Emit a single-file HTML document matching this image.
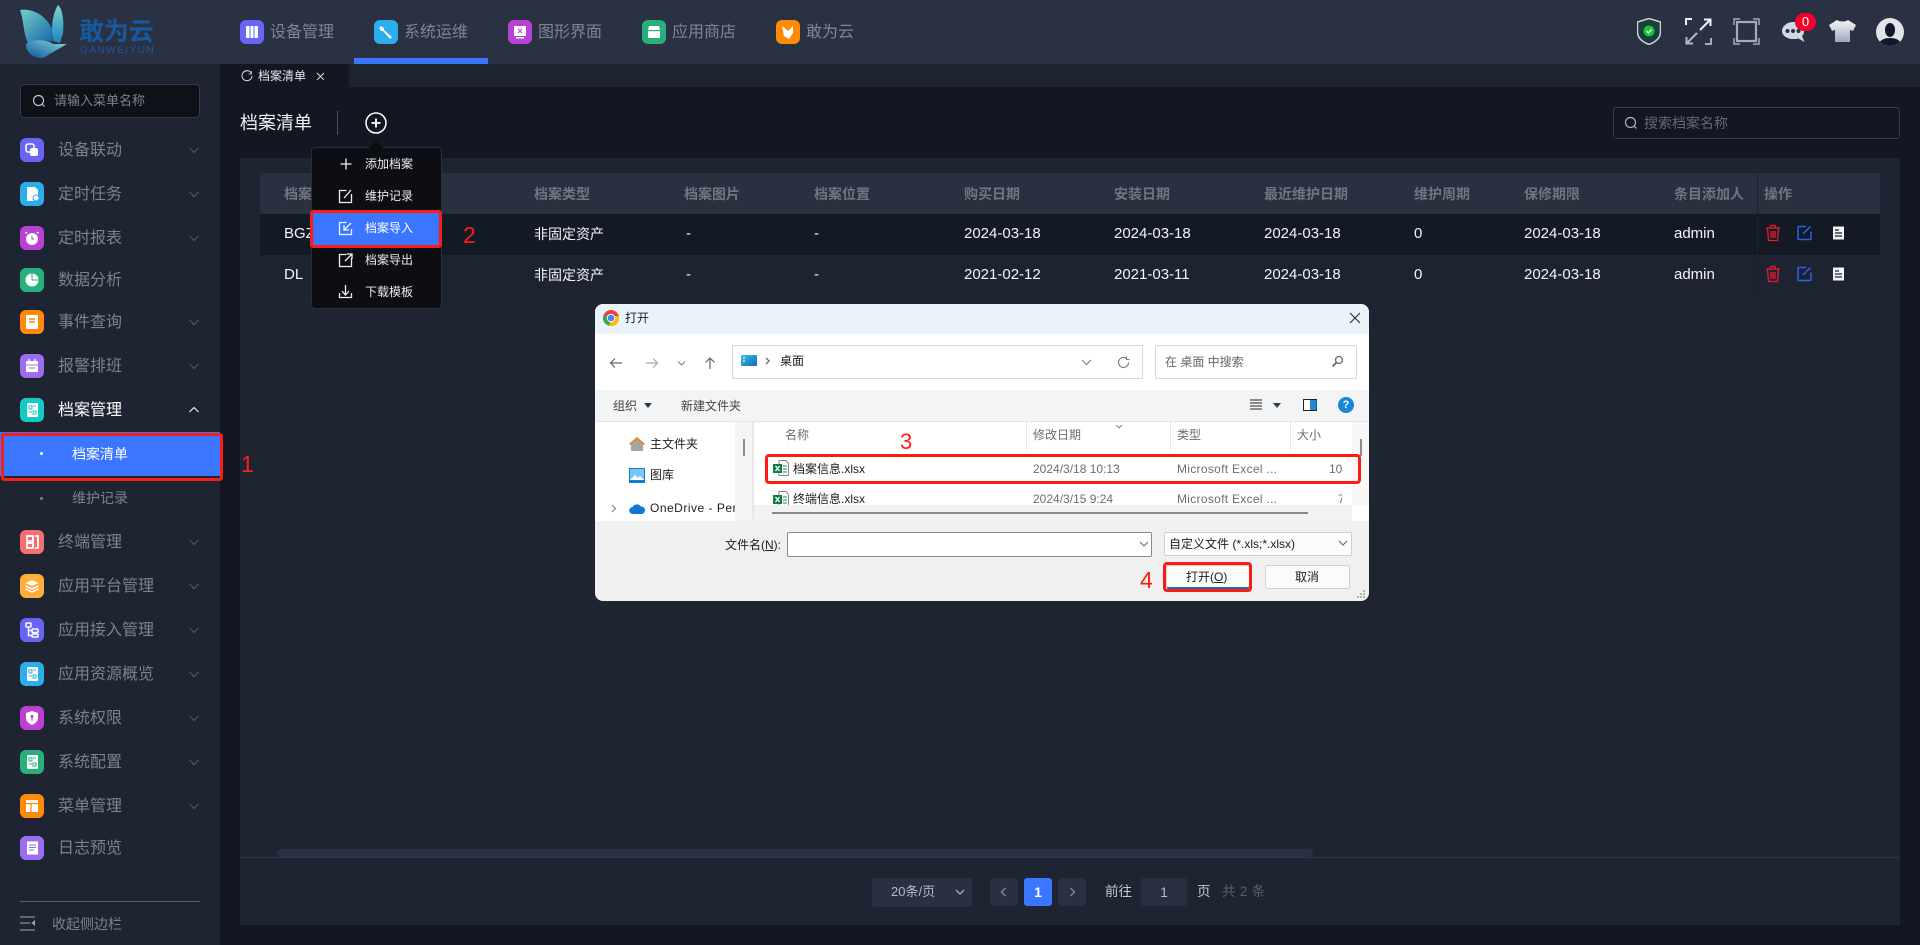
<!DOCTYPE html>
<html lang="zh-CN"><head><meta charset="utf-8"><title>档案清单</title>
<style>
html,body{margin:0;padding:0;width:1920px;height:945px;overflow:hidden;background:#131722;font-family:"Liberation Sans","Noto Sans CJK SC",sans-serif}
div,span,svg{position:absolute;box-sizing:border-box}
.t{white-space:nowrap}
.ic{width:24px;height:24px;border-radius:6px;left:20px}
.ic svg{left:0;top:0;width:24px;height:24px}
.m{left:58px;height:24px;line-height:24px;font-size:16px;color:#7c818b;white-space:nowrap;margin-top:1px}
.n{top:20px;width:24px;height:24px;border-radius:6px}
.n svg{left:0;top:0;width:24px;height:24px}
.nt{top:21px;height:24px;line-height:24px;font-size:16px;color:#81858d;white-space:nowrap}
.th{top:184px;height:20px;line-height:20px;font-size:14px;font-weight:700;color:#71757e;white-space:nowrap}
.td{height:20px;line-height:20px;font-size:15px;color:#f2f4f8;white-space:nowrap;margin-top:1px}
.tc{font-size:14px}
.p{left:365px;height:20px;line-height:20px;font-size:12px;color:#e8eaee;white-space:nowrap}
.r{border:3px solid #fb1c14;border-radius:3px}
.num{color:#fb1c14;font-size:23px;line-height:26px;height:26px;white-space:nowrap}
.d{font-size:12px;line-height:18px;height:18px;color:#202020;white-space:nowrap}
.g{color:#6d6d6d}
.b{background:#2a3040;border-radius:3px}
</style></head><body>

<!-- header -->
<div style="left:0;top:0;width:1920px;height:64px;background:#2a3142"></div>
<svg style="left:18px;top:3px;width:50px;height:57px" viewBox="0 0 50 57">
<defs><linearGradient id="w1" x1="0" y1="0" x2="1" y2="1"><stop offset="0" stop-color="#74cfc5"/><stop offset="1" stop-color="#1767ad"/></linearGradient><linearGradient id="w2" x1="0" y1="0" x2="0" y2="1"><stop offset="0" stop-color="#7cd4cb"/><stop offset="1" stop-color="#1e86c0"/></linearGradient><linearGradient id="w3" x1="1" y1="0" x2="0" y2="1"><stop offset="0" stop-color="#88dcd0"/><stop offset="1" stop-color="#0f52a4"/></linearGradient></defs>
<path d="M2 7C14 5 28 12 34 26L34 39C26 36 16 38 10 40C5 30 6 18 2 7Z" fill="url(#w1)"/>
<path d="M40 2C45 6 46 20 45 30L42 40L35 38C33 26 34 12 40 2Z" fill="url(#w2)"/>
<path d="M8 41C16 36 28 36 35 41L49 41L25 55C15 55 8 50 8 41Z" fill="url(#w3)"/>
</svg>
<div class="t" style="left:79px;top:17px;height:30px;line-height:30px;font-size:25px;font-weight:700;color:#17599f;letter-spacing:-.2px">敢为云</div>
<div class="t" style="left:80px;top:45px;height:11px;line-height:11px;font-size:10px;color:#17599f;letter-spacing:1.500px">GANWEIYUN</div>

<div class="n" style="left:240px;background:#6a64f5"><svg viewBox="0 0 24 24"><rect x="6" y="6" width="12" height="12" rx="1" fill="#fff"/><path d="M10 6v12M14 6v12" stroke="#6a64f5"/></svg></div><div class="nt" style="left:270px">设备管理</div>
<div class="n" style="left:374px;background:#2aaeec"><svg viewBox="0 0 24 24"><path d="M7 6l3 2v2l8 7-2 2-7-8H7L5 8z" fill="#fff"/></svg></div><div class="nt" style="left:404px">系统运维</div>
<div class="n" style="left:508px;background:#b942d2"><svg viewBox="0 0 24 24"><rect x="6" y="6" width="12" height="10" fill="#fff"/><rect x="8" y="17" width="8" height="1.5" fill="#fff"/><path d="M10 9l4 4M14 9l-4 4" stroke="#b942d2"/></svg></div><div class="nt" style="left:538px">图形界面</div>
<div class="n" style="left:642px;background:#27b07c"><svg viewBox="0 0 24 24"><path d="M7 6h10l1 4v8H6v-8z" fill="#fff"/><rect x="6" y="10" width="12" height="1.2" fill="#27b07c"/></svg></div><div class="nt" style="left:672px">应用商店</div>
<div class="n" style="left:776px;background:#ff8a05"><svg viewBox="0 0 24 24"><path d="M6 6l6 5 5-5v7l-4 6-5-3z" fill="#fff"/></svg></div><div class="nt" style="left:806px">敢为云</div>
<div style="left:354px;top:58px;width:134px;height:6px;background:#3a76ff"></div>

<!-- header right -->
<svg style="left:1637px;top:18px;width:24px;height:27px" viewBox="0 0 24 27"><path d="M12 .5L23.500 4v10c0 6-5 10-11.500 12.500C5.500 24 .5 20 .5 14V4z" fill="#1c3d3c" stroke="#cfd4dc" stroke-width="1.500"/><circle cx="12" cy="13" r="5.500" fill="#17c739"/><path d="M9.500 13l2 2 3-3.500" stroke="#fff" stroke-width="1.300" fill="none"/></svg>
<svg style="left:1685px;top:18px;width:27px;height:27px" viewBox="0 0 27 27" fill="none" stroke-width="2"><path d="M1 7V1h6" stroke="#f1f3f6"/><path d="M26 20v6h-6" stroke="#a4adbd"/><path d="M15 12L25 2M19 1.500h6.500V8" stroke="#f1f3f6"/><path d="M12 15L2 25M8 25.500H1.500V19" stroke="#b2bac8"/></svg>
<svg style="left:1733px;top:18px;width:27px;height:27px" viewBox="0 0 27 27" fill="none" stroke="#a3acba" stroke-width="2"><path d="M1 7V1h6M20 1h6v6M26 20v6h-6M7 26H1v-6" stroke-width="1.500"/><rect x="4" y="4" width="19" height="19" stroke-width="2.200"/></svg>
<svg style="left:1782px;top:20px;width:25px;height:24px" viewBox="0 0 25 24"><path d="M11 2c6 0 11 4 11 9 0 2-.5 4-2 5l2.500 6-6-3.500c-2 .5-3.500.5-5.500.5C5 19 0 15.500 0 11S5 2 11 2z" fill="#d3d8e0"/><circle cx="5.500" cy="11" r="2" fill="#2a3142"/><circle cx="11" cy="11" r="2" fill="#2a3142"/><circle cx="16.500" cy="11" r="2" fill="#2a3142"/></svg>
<div style="left:1795px;top:13px;width:21px;height:18px;border-radius:9px;background:#f5002d;color:#fff;font-size:13px;line-height:18px;text-align:center">0</div>
<svg style="left:1829px;top:19px;width:27px;height:24px" viewBox="0 0 27 24"><defs><linearGradient id="sh" x1="0" y1="0" x2="0" y2="1"><stop offset="0" stop-color="#f4f5f7"/><stop offset="1" stop-color="#9fa9bb"/></linearGradient></defs><path d="M8 1c2 2 9 2 11 0l8 5-3 6-3-1v12H6V11l-3 1-3-6z" fill="url(#sh)"/></svg>
<svg style="left:1876px;top:18px;width:28px;height:28px" viewBox="0 0 28 28"><defs><clipPath id="av"><circle cx="14" cy="14" r="14"/></clipPath></defs><circle cx="14" cy="14" r="14" fill="#e2e4e8"/><g clip-path="url(#av)"><ellipse cx="14" cy="12" rx="5" ry="7" fill="#10192e"/><path d="M2 28c1-6 6-8 12-8s11 2 12 8z" fill="#10192e"/></g></svg>

<!-- sidebar -->
<div style="left:0;top:64px;width:220px;height:881px;background:#1f2433"></div>
<div style="left:20px;top:84px;width:180px;height:34px;background:#0f1119;border:1px solid #333a4d;border-radius:4px"></div>
<svg style="left:32px;top:94px;width:14px;height:14px" viewBox="0 0 14 14" fill="none" stroke="#c0c4cc" stroke-width="1.200"><circle cx="6.500" cy="6.500" r="5"/><path d="M10 10l2.500 2.500"/></svg>
<div class="t" style="left:54px;top:91px;height:20px;line-height:20px;font-size:13px;color:#7e828b">请输入菜单名称</div>

<div class="ic" style="top:138px;background:#6a64f5"><svg viewBox="0 0 24 24"><rect x="6" y="6" width="8" height="8" rx="2" fill="none" stroke="#fff" stroke-width="1.500"/><rect x="10" y="10" width="8" height="8" rx="2" fill="#fff"/></svg></div><div class="m" style="top:138px">设备联动</div>
<div class="ic" style="top:182px;background:#2aaeec"><svg viewBox="0 0 24 24"><path d="M7 5h8l3 3v5h-3v6H7z" fill="#fff"/><circle cx="16" cy="16" r="3" fill="#fff" stroke="#2aaeec"/></svg></div><div class="m" style="top:182px">定时任务</div>
<div class="ic" style="top:226px;background:#b942d2"><svg viewBox="0 0 24 24"><circle cx="12" cy="13" r="6" fill="#fff"/><path d="M7 6l-1.500 1.500M17 6l1.500 1.500" stroke="#fff" stroke-width="1.500"/><path d="M12 10v3h2" stroke="#b942d2" fill="none"/></svg></div><div class="m" style="top:226px">定时报表</div>
<div class="ic" style="top:268px;background:#27b07c"><svg viewBox="0 0 24 24"><circle cx="12" cy="12" r="6.500" fill="#fff"/><path d="M12 12V5.500M12 12h6.500" stroke="#27b07c" stroke-width="1"/></svg></div><div class="m" style="top:268px">数据分析</div>
<div class="ic" style="top:310px;background:#ff8a05"><svg viewBox="0 0 24 24"><rect x="6" y="5" width="12" height="14" rx="1" fill="#fff"/><path d="M9 9h6M9 12h6" stroke="#ff8a05" stroke-width="1.500"/></svg></div><div class="m" style="top:310px">事件查询</div>
<div class="ic" style="top:354px;background:#9b6ef0"><svg viewBox="0 0 24 24"><rect x="6" y="7" width="12" height="11" rx="1" fill="#fff"/><path d="M9 5v4M15 5v4" stroke="#fff" stroke-width="1.500"/><path d="M6 11h12M9 14h6" stroke="#9b6ef0"/></svg></div><div class="m" style="top:354px">报警排班</div>
<div class="ic" style="top:398px;background:#12cbc4"><svg viewBox="0 0 24 24"><rect x="7" y="5" width="11" height="14" rx="1" fill="#fff"/><path d="M9 8h3v3H9zM13 13h3v3h-3zM13 8h3M9 14h3" stroke="#12cbc4" fill="none"/></svg></div><div class="m" style="top:398px;color:#fff">档案管理</div>

<div style="left:0;top:432px;width:220px;height:44px;background:#3a76ff"></div>
<div style="left:40px;top:452px;width:3px;height:3px;border-radius:50%;background:#fff"></div>
<div class="t" style="left:72px;top:444px;height:20px;line-height:20px;font-size:14px;color:#fff">档案清单</div>
<div style="left:40px;top:497px;width:3px;height:3px;border-radius:50%;background:#7c818b"></div>
<div class="t" style="left:72px;top:488px;height:20px;line-height:20px;font-size:14px;color:#7c818b">维护记录</div>

<div class="ic" style="top:530px;background:#f56f6f"><svg viewBox="0 0 24 24"><path d="M7 6h6v5H7zM7 13h6v5H7zM15 6h3v12h-3" fill="none" stroke="#fff" stroke-width="1.800"/></svg></div><div class="m" style="top:530px">终端管理</div>
<div class="ic" style="top:574px;background:#ffae3b"><svg viewBox="0 0 24 24"><path d="M12 6l6.500 3-6.500 3-6.500-3z" fill="#fff"/><path d="M5.500 12l6.500 3 6.500-3M5.500 15l6.500 3 6.500-3" stroke="#fff" stroke-width="1.500" fill="none"/></svg></div><div class="m" style="top:574px">应用平台管理</div>
<div class="ic" style="top:618px;background:#6a64f5"><svg viewBox="0 0 24 24" fill="none" stroke="#fff" stroke-width="1.500"><rect x="6" y="5" width="5" height="4" rx="1"/><rect x="12" y="11" width="6" height="3.500" rx="1"/><rect x="12" y="16" width="6" height="3" rx="1"/><path d="M8.500 9v8.500H12M8.500 12.500H12"/></svg></div><div class="m" style="top:618px">应用接入管理</div>
<div class="ic" style="top:662px;background:#2aaeec"><svg viewBox="0 0 24 24"><rect x="7" y="5" width="11" height="14" rx="1" fill="#fff"/><path d="M9 8h3v3H9zM13 13h3v3h-3zM13 8h3M9 14h3" stroke="#2aaeec" fill="none"/></svg></div><div class="m" style="top:662px">应用资源概览</div>
<div class="ic" style="top:706px;background:#b942d2"><svg viewBox="0 0 24 24"><path d="M12 5l6 2v5c0 3-2.500 5.500-6 7-3.500-1.500-6-4-6-7V7z" fill="#fff"/><circle cx="12" cy="10.500" r="1.500" fill="#b942d2"/><path d="M12 12v3" stroke="#b942d2"/></svg></div><div class="m" style="top:706px">系统权限</div>
<div class="ic" style="top:750px;background:#27b07c"><svg viewBox="0 0 24 24"><rect x="7" y="5" width="11" height="14" rx="1" fill="#fff"/><path d="M9 8h3v3H9zM13 13h3v3h-3zM13 8h3M9 14h3" stroke="#27b07c" fill="none"/></svg></div><div class="m" style="top:750px">系统配置</div>
<div class="ic" style="top:794px;background:#ff8a05"><svg viewBox="0 0 24 24"><rect x="6" y="6" width="12" height="12" fill="#fff"/><path d="M6 9.500h12M11 9.500V18" stroke="#ff8a05" stroke-width="1.300"/></svg></div><div class="m" style="top:794px">菜单管理</div>
<div class="ic" style="top:836px;background:#9b6ef0"><svg viewBox="0 0 24 24"><rect x="7" y="5.500" width="11" height="13" fill="#fff"/><path d="M9 9h7M9 11.500h7M9 14h5" stroke="#9b6ef0"/></svg></div><div class="m" style="top:836px">日志预览</div>

<svg style="left:0;top:0;width:220px;height:850px" viewBox="0 0 220 850" fill="none" stroke="#565b65" stroke-width="1">
<path d="M189.500 148l4.500 4.500 4.500-4.500M189.500 192l4.500 4.500 4.500-4.500M189.500 236l4.500 4.500 4.500-4.500M189.500 320l4.500 4.500 4.500-4.500M189.500 364l4.500 4.500 4.500-4.500M189.500 540l4.500 4.500 4.500-4.500M189.500 584l4.500 4.500 4.500-4.500M189.500 628l4.500 4.500 4.500-4.500M189.500 672l4.500 4.500 4.500-4.500M189.500 716l4.500 4.500 4.500-4.500M189.500 760l4.500 4.500 4.500-4.500M189.500 804l4.500 4.500 4.500-4.500"/>
<path d="M189.500 412l4.500-4.500 4.500 4.500" stroke="#fff"/>
</svg>
<div style="left:20px;top:901px;width:180px;height:1px;background:#5b5f69"></div>
<svg style="left:20px;top:916px;width:16px;height:15px" viewBox="0 0 16 15"><path d="M0 1h15M0 7h10M0 14h15" stroke="#a4a8b0" stroke-width="1"/><path d="M15 4v6l-3.500-3z" fill="#a4a8b0"/></svg>
<div class="t" style="left:52px;top:914px;height:20px;line-height:20px;font-size:14px;color:#7c818b">收起侧边栏</div>

<!-- tabs -->
<div style="left:220px;top:64px;width:1700px;height:23px;background:#1e2332"></div>
<div style="left:220px;top:64px;width:129px;height:23px;background:#131722"></div>
<svg style="left:241px;top:70px;width:12px;height:12px" viewBox="0 0 12 12" fill="none" stroke="#dfe1e6" stroke-width="1"><path d="M10.500 3.500A5 5 0 1 0 11 6"/><path d="M10.500 1v3h-3" stroke-width=".7"/></svg>
<div class="t" style="left:258px;top:66px;height:20px;line-height:20px;font-size:12px;color:#e6e8ec">档案清单</div>
<svg style="left:316px;top:72px;width:9px;height:9px" viewBox="0 0 9 9"><path d="M1 1l7 7M8 1L1 8" stroke="#d8dade"/></svg>

<!-- title -->
<div class="t" style="left:240px;top:111px;height:24px;line-height:24px;font-size:18px;color:#eef0f4">档案清单</div>
<div style="left:337px;top:111px;width:1px;height:24px;background:#4b4f5a"></div>
<svg style="left:365px;top:112px;width:22px;height:22px" viewBox="0 0 22 22" fill="none" stroke="#fff"><circle cx="11" cy="11" r="10" stroke-width="1.500"/><path d="M6.500 11h9M11 6.500v9" stroke-width="1.800"/></svg>
<div style="left:1613px;top:107px;width:287px;height:32px;border:1px solid #333a4d;border-radius:3px"></div>
<svg style="left:1624px;top:116px;width:14px;height:14px" viewBox="0 0 14 14" fill="none" stroke="#a9b2c0" stroke-width="1.200"><circle cx="6.500" cy="6.500" r="5"/><path d="M10 10l2.500 2.500"/></svg>
<div class="t" style="left:1644px;top:113px;height:20px;line-height:20px;font-size:14px;color:#636872">搜索档案名称</div>

<!-- card -->
<div style="left:240px;top:158px;width:1660px;height:767px;background:#1f2433"></div>
<div style="left:260px;top:173px;width:1620px;height:41px;background:#2a3040"></div>
<div style="left:260px;top:214px;width:1620px;height:41px;background:#141926"></div>
<div style="left:260px;top:255px;width:1620px;height:41px;background:#1e2332"></div>
<div style="left:1757px;top:173px;width:1px;height:677px;background:#1c2130"></div>

<div class="th" style="left:284px">档案</div><div class="th" style="left:534px">档案类型</div><div class="th" style="left:684px">档案图片</div><div class="th" style="left:814px">档案位置</div><div class="th" style="left:964px">购买日期</div><div class="th" style="left:1114px">安装日期</div><div class="th" style="left:1264px">最近维护日期</div><div class="th" style="left:1414px">维护周期</div><div class="th" style="left:1524px">保修期限</div><div class="th" style="left:1674px">条目添加人</div><div class="th" style="left:1764px">操作</div>

<div class="td" style="left:284px;top:223px">BGZ</div><div class="td tc" style="left:534px;top:223px">非固定资产</div><div class="td" style="left:686px;top:223px">-</div><div class="td" style="left:814px;top:223px">-</div><div class="td" style="left:964px;top:223px">2024-03-18</div><div class="td" style="left:1114px;top:223px">2024-03-18</div><div class="td" style="left:1264px;top:223px">2024-03-18</div><div class="td" style="left:1414px;top:223px">0</div><div class="td" style="left:1524px;top:223px">2024-03-18</div><div class="td" style="left:1674px;top:223px">admin</div>
<div class="td" style="left:284px;top:264px">DL</div><div class="td tc" style="left:534px;top:264px">非固定资产</div><div class="td" style="left:686px;top:264px">-</div><div class="td" style="left:814px;top:264px">-</div><div class="td" style="left:964px;top:264px">2021-02-12</div><div class="td" style="left:1114px;top:264px">2021-03-11</div><div class="td" style="left:1264px;top:264px">2024-03-18</div><div class="td" style="left:1414px;top:264px">0</div><div class="td" style="left:1524px;top:264px">2024-03-18</div><div class="td" style="left:1674px;top:264px">admin</div>

<svg style="left:1764px;top:224px;width:84px;height:18px" viewBox="0 0 84 18" fill="none"><path d="M2 4h14M6 4l1-2.500h4L12 4M3.500 4l1 12.500h9L14.500 4M7 7v7M9 7v7M11 7v7" stroke="#e91c2c" stroke-width="1.300"/><path d="M42 2.500h-7a1 1 0 0 0-1 1v11a1 1 0 0 0 1 1h11a1 1 0 0 0 1-1v-7M39 10l7.500-7.500" stroke="#2c61f0" stroke-width="1.500"/><rect x="69" y="2.500" width="11" height="13" fill="#f2f4f8"/><path d="M71 6h4M71 9h7M71 12h7" stroke="#141926" stroke-width="1.200"/></svg>
<svg style="left:1764px;top:265px;width:84px;height:18px" viewBox="0 0 84 18" fill="none"><path d="M2 4h14M6 4l1-2.500h4L12 4M3.500 4l1 12.500h9L14.500 4M7 7v7M9 7v7M11 7v7" stroke="#e91c2c" stroke-width="1.300"/><path d="M42 2.500h-7a1 1 0 0 0-1 1v11a1 1 0 0 0 1 1h11a1 1 0 0 0 1-1v-7M39 10l7.500-7.500" stroke="#2c61f0" stroke-width="1.500"/><rect x="69" y="2.500" width="11" height="13" fill="#f2f4f8"/><path d="M71 6h4M71 9h7M71 12h7" stroke="#1e2332" stroke-width="1.200"/></svg>

<!-- scroll + pagination -->
<div style="left:277px;top:849px;width:1036px;height:8px;background:#2a3040;border-radius:4px"></div>
<div style="left:240px;top:857px;width:1660px;height:1px;background:#303646"></div>
<div class="b" style="left:872px;top:878px;width:100px;height:29px"></div>
<div class="t" style="left:891px;top:882px;height:20px;line-height:20px;font-size:13px;color:#b5bac4">20条/页</div>
<svg style="left:955px;top:889px;width:10px;height:7px" viewBox="0 0 10 7"><path d="M1 1l4 4 4-4" stroke="#b5bac4" stroke-width="1.200" fill="none"/></svg>
<div class="b" style="left:990px;top:878px;width:28px;height:28px"></div>
<svg style="left:1000px;top:887px;width:7px;height:10px" viewBox="0 0 7 10"><path d="M5.500 1l-4 4 4 4" stroke="#7f8896" stroke-width="1.400" fill="none"/></svg>
<div style="left:1024px;top:878px;width:28px;height:28px;background:#3a76ff;border-radius:3px;color:#fff;font-size:14px;font-weight:700;line-height:28px;text-align:center">1</div>
<div class="b" style="left:1058px;top:878px;width:28px;height:28px"></div>
<svg style="left:1069px;top:887px;width:7px;height:10px" viewBox="0 0 7 10"><path d="M1.500 1l4 4-4 4" stroke="#7f8896" stroke-width="1.400" fill="none"/></svg>
<div class="t" style="left:1105px;top:882px;height:20px;line-height:20px;font-size:13.500px;color:#c6cad2">前往</div>
<div class="b" style="left:1141px;top:878px;width:46px;height:28px;color:#b5bac4;font-size:14px;line-height:28px;text-align:center">1</div>
<div class="t" style="left:1197px;top:882px;height:20px;line-height:20px;font-size:13.500px;color:#c6cad2">页</div>
<div class="t" style="left:1222px;top:882px;height:20px;line-height:20px;font-size:13.500px;color:#5b5f69;letter-spacing:.3px">共 2 条</div>

<!-- popup -->
<div style="left:311px;top:147px;width:131px;height:162px;background:#0c0e14;border:1px solid #2a2f3c;border-radius:4px"></div>
<svg style="left:369px;top:140px;width:14px;height:8px" viewBox="0 0 14 8"><path d="M0 8L7 1l7 7z" fill="#0c0e14"/></svg>
<svg style="left:338px;top:156px;width:16px;height:148px" viewBox="0 0 16 148" fill="none" stroke="#eef0f4" stroke-width="1.300">
<path d="M8 2.500v11M2.500 8h11"/>
<path d="M13.500 38v8.500h-12v-12h7M6 42l7-8"/>
<path d="M13.500 102v8.500h-12v-12h7M7 105l7-7M9 98h5v5"/>
<path d="M1.500 137v4.500h12V137M7.500 129v10M4 135l3.500 4 3.500-4"/>
</svg>
<div class="p" style="left:365px;top:154px">添加档案</div>
<div class="p" style="left:365px;top:186px">维护记录</div>
<div class="p" style="left:365px;top:250px">档案导出</div>
<div class="p" style="left:365px;top:282px">下载模板</div>
<div style="left:312px;top:213px;width:129px;height:32px;background:#3a76ff"></div>
<svg style="left:338px;top:220px;width:16px;height:16px" viewBox="0 0 16 16" fill="none" stroke="#f4f5fb" stroke-width="1.300"><path d="M13.500 9v5.500h-12v-12h7M13 3l-7 7M6 5v5h5"/></svg>
<div class="p" style="left:365px;top:218px;color:#fff">档案导入</div>
<div class="r" style="left:310px;top:210px;width:132px;height:38px"></div>
<div class="num" style="left:463px;top:222px">2</div>

<div class="r" style="left:1px;top:433px;width:222px;height:48px"></div>
<div class="num" style="left:241px;top:451px">1</div>

<!-- dialog -->
<div style="left:595px;top:304px;width:774px;height:297px;background:#f0f0f0;border-radius:8px;overflow:hidden">
 <div style="left:0;top:0;width:774px;height:30px;background:#eaf3f9"></div>
 <div style="left:0;top:30px;width:774px;height:56px;background:#fff"></div>
 <div style="left:0;top:86px;width:774px;height:31px;background:#f3f4f6"></div>
 <div style="left:0;top:117px;width:774px;height:1px;background:#e5e5e5"></div>
 <div style="left:0;top:118px;width:140px;height:99px;background:#fff"></div>
 <div style="left:140px;top:118px;width:17px;height:99px;background:#f4f4f4"></div>
 <div style="left:157px;top:118px;width:2px;height:99px;background:#e8e8e8"></div>
 <div style="left:159px;top:118px;width:615px;height:83px;background:#fff"></div>
 <div style="left:757px;top:118px;width:17px;height:83px;background:#f8f8f8"></div>
 <div style="left:160px;top:201px;width:597px;height:16px;background:#f2f2f2"></div>
 <div style="left:177px;top:208px;width:536px;height:2px;background:#8a8a8a"></div>
 <div style="left:757px;top:201px;width:17px;height:16px;background:#fff"></div>
 <div style="left:148px;top:135px;width:2px;height:17px;background:#8c8c8c"></div>
 <div style="left:765px;top:135px;width:2px;height:17px;background:#8c8c8c"></div>

 <svg style="left:8px;top:6px;width:16px;height:16px" viewBox="0 0 16 16"><circle cx="8" cy="8" r="8" fill="#ea4335"/><path d="M8 8L1 4.500A8 8 0 0 0 6 15.800z" fill="#34a853"/><path d="M8 8L6 15.800A8 8 0 0 0 15.800 6H8z" fill="#fbbc05"/><circle cx="8" cy="8" r="3.800" fill="#4285f4" stroke="#fff" stroke-width="1"/></svg>
 <div class="d" style="left:30px;top:5px">打开</div>
 <svg style="left:754px;top:8px;width:12px;height:12px" viewBox="0 0 12 12"><path d="M1 1l10 10M11 1L1 11" stroke="#222" stroke-width="1"/></svg>

 <svg style="left:14px;top:52px;width:130px;height:14px" viewBox="0 0 130 14" fill="none"><path d="M13 7H2M6 2.500L1.500 7 6 11.500" stroke="#666" stroke-width="1.200"/><path d="M37 7h11M44 2.500L48.500 7 44 11.500" stroke="#aaa" stroke-width="1.200"/><path d="M69 5.500l3.500 3.500 3.500-3.500" stroke="#777"/><path d="M101 13V2M96.500 6.500L101 2l4.500 4.500" stroke="#666" stroke-width="1.200"/></svg>
 <div style="left:137px;top:41px;width:411px;height:34px;background:#fff;border:1px solid #d9d9d9"></div>
 <svg style="left:146px;top:51px;width:16px;height:12px" viewBox="0 0 16 12"><defs><linearGradient id="dk" x1="0" y1="0" x2="1" y2="1"><stop offset="0" stop-color="#35c3ea"/><stop offset="1" stop-color="#0f6cb8"/></linearGradient></defs><rect width="16" height="11" rx="1" fill="url(#dk)"/><path d="M2 3h2M2 6h2" stroke="#fff"/></svg>
 <svg style="left:170px;top:53px;width:6px;height:8px" viewBox="0 0 6 8"><path d="M1 1l3 3-3 3" stroke="#555" fill="none" stroke-width="1.200"/></svg>
 <div class="d" style="left:185px;top:48px">桌面</div>
 <svg style="left:486px;top:55px;width:11px;height:7px" viewBox="0 0 11 7"><path d="M1 1l4.500 4.500L10 1" stroke="#777" fill="none"/></svg>
 <svg style="left:522px;top:52px;width:13px;height:13px" viewBox="0 0 13 13" fill="none" stroke="#777" stroke-width="1.100"><path d="M11.500 6.500A5 5 0 1 1 9.500 2.500M9.500 .5v3h3"/></svg>
 <div style="left:560px;top:41px;width:202px;height:34px;background:#fff;border:1px solid #d9d9d9"></div>
 <div class="d g" style="left:570px;top:49px;color:#666">在 桌面 中搜索</div>
 <svg style="left:736px;top:51px;width:13px;height:13px" viewBox="0 0 13 13" fill="none" stroke="#666"><circle cx="8" cy="5" r="3.500" stroke-width="1.300"/><path d="M5.500 7.500L1.500 11.500" stroke-width="1.800"/></svg>

 <div class="d" style="left:18px;top:93px;color:#444">组织</div>
 <svg style="left:49px;top:99px;width:8px;height:5px" viewBox="0 0 8 5"><path d="M0 0h8L4 5z" fill="#2f3e54"/></svg>
 <div class="d" style="left:86px;top:93px;color:#444">新建文件夹</div>
 <svg style="left:654px;top:95px;width:14px;height:12px" viewBox="0 0 14 12"><path d="M1 1h12M1 4h12M1 7h12M1 10h12" stroke="#222"/></svg>
 <svg style="left:678px;top:99px;width:8px;height:5px" viewBox="0 0 8 5"><path d="M0 0h8L4 5z" fill="#2f3e54"/></svg>
 <svg style="left:708px;top:95px;width:14px;height:12px" viewBox="0 0 14 12"><rect x=".5" y=".5" width="13" height="11" fill="#fff" stroke="#222"/><rect x="7" y="1" width="6.500" height="10" fill="#1e88d2"/></svg>
 <svg style="left:743px;top:93px;width:16px;height:16px" viewBox="0 0 16 16"><circle cx="8" cy="8" r="8" fill="#1a86d6"/></svg>
 <div class="t" style="left:743px;top:93px;width:16px;height:16px;color:#fff;font-size:11px;font-weight:700;line-height:16px;text-align:center">?</div>

 <svg style="left:34px;top:132px;width:16px;height:16px" viewBox="0 0 16 16"><path d="M8 1L0 8h2v7h12V8h2z" fill="#a5a5a5"/><path d="M8 1L0 8l1.500 1L8 3.500 14.500 9 16 8z" fill="#e8832a"/></svg>
 <div class="d" style="left:55px;top:131px">主文件夹</div>
 <svg style="left:34px;top:164px;width:16px;height:15px" viewBox="0 0 16 15"><rect width="16" height="15" fill="#0f7fd2"/><rect x="1" y="1" width="14" height="11" fill="#79c5f4"/><path d="M1 12l5-5 3 3 2-2 4 4z" fill="#fff"/></svg>
 <div class="d" style="left:55px;top:162px">图库</div>
 <svg style="left:16px;top:200px;width:6px;height:9px" viewBox="0 0 6 9"><path d="M1 1l3.500 3.500L1 8" stroke="#888" fill="none" stroke-width="1.200"/></svg>
 <svg style="left:34px;top:199px;width:16px;height:11px" viewBox="0 0 16 11"><path d="M4 11a3.500 3.500 0 0 1-.5-7A5 5 0 0 1 12 3.500a3.500 3.500 0 0 1 .5 7.500z" fill="#0f78d4"/></svg>
 <div class="d" style="left:55px;top:195px;width:85px;overflow:hidden;letter-spacing:.5px">OneDrive - Personal</div>

 <div class="d g" style="left:190px;top:122px">名称</div>
 <div class="d g" style="left:438px;top:122px">修改日期</div>
 <div class="d g" style="left:582px;top:122px">类型</div>
 <div class="d g" style="left:702px;top:122px">大小</div>
 <div style="left:431px;top:118px;width:1px;height:28px;background:#e5e5e5"></div>
 <div style="left:575px;top:118px;width:1px;height:28px;background:#e5e5e5"></div>
 <div style="left:695px;top:118px;width:1px;height:28px;background:#e5e5e5"></div>
 <svg style="left:520px;top:120px;width:8px;height:5px" viewBox="0 0 8 5"><path d="M1 1l3 3 3-3" stroke="#888" fill="none"/></svg>

 <svg style="left:178px;top:156px;width:16px;height:16px" viewBox="0 0 16 16"><path d="M6 .5h7l2.500 3V15.500H6z" fill="#fff" stroke="#888"/><path d="M10 6h4M10 9h4M10 12h4" stroke="#1f8a50"/><rect y="4" width="9" height="9" fill="#107c41"/><path d="M2.500 6l4 5M6.500 6l-4 5" stroke="#fff" stroke-width="1.300"/></svg>
 <div class="d" style="left:198px;top:156px">档案信息.xlsx</div>
 <div class="d g" style="left:438px;top:156px">2024/3/18 10:13</div>
 <div class="d g" style="left:582px;top:156px;letter-spacing:.3px">Microsoft Excel ...</div>
 <div class="d g" style="left:734px;top:156px;width:13px;overflow:hidden">10 KB</div>

 <div style="left:159px;top:187px;width:588px;height:14px;overflow:hidden">
 <svg style="left:19px;top:0;width:16px;height:16px" viewBox="0 0 16 16"><path d="M6 .5h7l2.500 3V15.500H6z" fill="#fff" stroke="#888"/><path d="M10 6h4M10 9h4M10 12h4" stroke="#1f8a50"/><rect y="4" width="9" height="9" fill="#107c41"/><path d="M2.500 6l4 5M6.500 6l-4 5" stroke="#fff" stroke-width="1.300"/></svg>
 <div class="d" style="left:39px;top:-1px">终端信息.xlsx</div>
 <div class="d g" style="left:279px;top:-1px">2024/3/15 9:24</div>
 <div class="d g" style="left:423px;top:-1px;letter-spacing:.3px">Microsoft Excel ...</div>
 <div class="d g" style="left:584px;top:-1px">7</div>
 </div>

 <div class="d" style="left:130px;top:232px">文件名(<u>N</u>):</div>
 <div style="left:192px;top:228px;width:365px;height:25px;background:#fff;border:1px solid #8a8a8a;border-radius:2px"></div>
 <svg style="left:544px;top:237px;width:10px;height:7px" viewBox="0 0 10 7"><path d="M1 1l4 4 4-4" stroke="#666" fill="none"/></svg>
 <div style="left:569px;top:228px;width:188px;height:24px;background:#fbfbfb;border:1px solid #d0d0d0;border-radius:2px"></div>
 <div class="d" style="left:574px;top:231px">自定义文件 (*.xls;*.xlsx)</div>
 <svg style="left:743px;top:236px;width:10px;height:7px" viewBox="0 0 10 7"><path d="M1 1l4 4 4-4" stroke="#666" fill="none"/></svg>
 <div style="left:571px;top:261px;width:84px;height:24px;background:#fbfbfb;border:1px solid #d0d0d0;border-bottom:2px solid #1d6fb8;border-radius:3px"></div>
 <div class="d" style="left:591px;top:264px">打开(<u>O</u>)</div>
 <div style="left:670px;top:261px;width:85px;height:24px;background:#fbfbfb;border:1px solid #d0d0d0;border-radius:3px"></div>
 <div class="d" style="left:700px;top:264px">取消</div>
 <svg style="left:762px;top:286px;width:8px;height:8px" viewBox="0 0 8 8"><path d="M6 0h2v2H6zM3 3h2v2H3zM6 3h2v2H6zM0 6h2v2H0zM3 6h2v2H3zM6 6h2v2H6z" fill="#b5b5b5"/></svg>
</div>

<div class="r" style="left:765px;top:454px;width:596px;height:30px;border-radius:4px"></div>
<div class="r" style="left:1163px;top:562px;width:89px;height:30px;border-radius:4px"></div>
<div class="num" style="left:900px;top:429px;font-size:22px">3</div>
<div class="num" style="left:1140px;top:567px;font-size:23px">4</div>
</body></html>
